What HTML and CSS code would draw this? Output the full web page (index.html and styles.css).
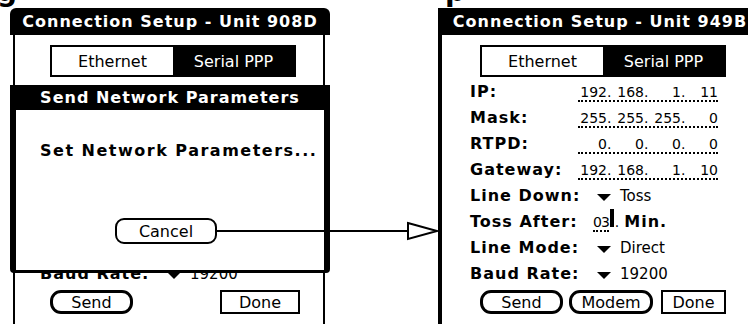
FILE: index.html
```html
<!DOCTYPE html>
<html lang="en">
<head>
    <meta charset="UTF-8">
    <title>Connection Setup</title>
    <link rel="stylesheet" href="styles.css">
</head>
<body>
    <div class="caption"><span class="frag-g">g</span><span class="frag-p">p</span></div>
    <div class="stage">
        <!-- left handheld: modal dialog over the setup form -->
        <div class="palm left">
            <div class="titlebar">Connection Setup - Unit 908D</div>
            <div class="form">
                <div class="tabs"><span class="tab">Ethernet</span><span class="tab on">Serial PPP</span></div>
                <div class="row covered"><span class="label">IP:</span><span class="ip"><span class="oct">192</span><span class="dot">.</span><span class="oct">168</span><span class="dot">.</span><span class="oct">1</span><span class="dot">.</span><span class="oct">12</span></span></div>
                <div class="row covered"><span class="label">Mask:</span><span class="ip"><span class="oct">255</span><span class="dot">.</span><span class="oct">255</span><span class="dot">.</span><span class="oct">255</span><span class="dot">.</span><span class="oct">0</span></span></div>
                <div class="row covered"><span class="label">RTPD:</span><span class="ip"><span class="oct">0</span><span class="dot">.</span><span class="oct">0</span><span class="dot">.</span><span class="oct">0</span><span class="dot">.</span><span class="oct">0</span></span></div>
                <div class="row covered"><span class="label">Gateway:</span><span class="ip"><span class="oct">192</span><span class="dot">.</span><span class="oct">168</span><span class="dot">.</span><span class="oct">1</span><span class="dot">.</span><span class="oct">10</span></span></div>
                <div class="row covered"><span class="label">Line Down:</span><span class="popup"><i class="tri"></i>Toss</span></div>
                <div class="row covered"><span class="label">Toss After:</span><span class="toss"><span class="mins">03</span><span class="dot-s">.</span><b class="unit">Min.</b></span></div>
                <div class="row covered"><span class="label">Line Mode:</span><span class="popup"><i class="tri"></i>Direct</span></div>
                <div class="row"><span class="label">Baud Rate:</span><span class="popup"><i class="tri"></i>19200</span></div>
                <div class="buttons">
                    <button class="btn round">Send</button>
                    <button class="btn square">Done</button>
                </div>
            </div>
            <div class="dialog">
                <div class="dialog-title">Send Network Parameters</div>
                <div class="dialog-body">
                    <p class="dialog-msg">Set Network Parameters...</p>
                    <button class="btn round thin cancel">Cancel</button>
                </div>
            </div>
        </div>

        <!-- right handheld: the setup form itself -->
        <div class="palm right">
            <div class="titlebar">Connection Setup - Unit 949B</div>
            <div class="form">
                <div class="tabs"><span class="tab">Ethernet</span><span class="tab on">Serial PPP</span></div>
                <div class="row"><span class="label">IP:</span><span class="ip"><span class="oct">192</span><span class="dot">.</span><span class="oct">168</span><span class="dot">.</span><span class="oct">1</span><span class="dot">.</span><span class="oct">11</span></span></div>
                <div class="row"><span class="label">Mask:</span><span class="ip"><span class="oct">255</span><span class="dot">.</span><span class="oct">255</span><span class="dot">.</span><span class="oct">255</span><span class="dot">.</span><span class="oct">0</span></span></div>
                <div class="row"><span class="label">RTPD:</span><span class="ip"><span class="oct">0</span><span class="dot">.</span><span class="oct">0</span><span class="dot">.</span><span class="oct">0</span><span class="dot">.</span><span class="oct">0</span></span></div>
                <div class="row"><span class="label">Gateway:</span><span class="ip"><span class="oct">192</span><span class="dot">.</span><span class="oct">168</span><span class="dot">.</span><span class="oct">1</span><span class="dot">.</span><span class="oct">10</span></span></div>
                <div class="row"><span class="label">Line Down:</span><span class="popup"><i class="tri"></i>Toss</span></div>
                <div class="row"><span class="label">Toss After:</span><span class="toss"><span class="mins">03</span><i class="caret"></i><span class="dot-s">.</span><b class="unit">Min.</b></span></div>
                <div class="row"><span class="label">Line Mode:</span><span class="popup"><i class="tri"></i>Direct</span></div>
                <div class="row"><span class="label">Baud Rate:</span><span class="popup"><i class="tri"></i>19200</span></div>
                <div class="buttons">
                    <button class="btn round">Send</button>
                    <button class="btn round">Modem</button>
                    <button class="btn square">Done</button>
                </div>
            </div>
        </div>
    </div>

    <svg class="arrow" width="748" height="324" viewBox="0 0 748 324">
        <line x1="217" y1="231" x2="409" y2="231" stroke="#000" stroke-width="2"/>
        <polygon points="408,223 437,231 408,239" fill="#fff" stroke="#000" stroke-width="2"/>
    </svg>
</body>
</html>
```

FILE: styles.css
```css
* {
    box-sizing: border-box;
}
body {
    margin: 0;
    width: 748px;
    height: 324px;
    overflow: hidden;
    position: relative;
    background: #fff;
    color: #000;
    font-family: "DejaVu Sans", sans-serif;
}
.caption {
    height: 8px;
    overflow: hidden;
    display: flex;
    font: bold 28px/28px "DejaVu Sans", sans-serif;
}
.caption span {
    display: block;
    margin-top: -22px;
}
.caption .frag-g {
    margin-left: -3px;
}
.caption .frag-p {
    margin-left: 428px;
}
.stage {
    display: flex;
    align-items: flex-start;
    padding-left: 10px;
    gap: 108px;
}
.palm {
    width: 320px;
    height: 316px;
    flex-shrink: 0;
    position: relative;
    display: flex;
    flex-direction: column;
}
.palm.right {
    border-left: 4px solid #000;
}
.titlebar {
    height: 27px;
    background: #000;
    color: #fff;
    font: bold 16px/27px "DejaVu Sans", sans-serif;
    letter-spacing: 1px;
    text-align: center;
    white-space: nowrap;
}
.left .titlebar {
    border-radius: 6px 6px 0 0;
}
.form {
    flex: 1;
    padding-top: 10px;
}
.left .form {
    margin: 0 5px 0 3px;
    padding-left: 25px;
    border-left: 2px solid #000;
    border-right: 2px solid #000;
}
.right .form {
    padding-left: 28px;
}
.tabs {
    display: flex;
    width: 246px;
    height: 32px;
    margin: 0 0 2px 10px;
    border: 2px solid #000;
    font-size: 16px;
}
.tab {
    flex: 1;
    display: flex;
    align-items: center;
    justify-content: center;
}
.tab.on {
    background: #000;
    color: #fff;
}
.row {
    display: flex;
    align-items: baseline;
    height: 26px;
    white-space: nowrap;
}
.row.covered {
    visibility: hidden;
}
.label {
    width: 108px;
    flex-shrink: 0;
    font: bold 16px/26px "DejaVu Sans", sans-serif;
    letter-spacing: 1px;
}
.ip {
    display: flex;
    width: 140px;
    font: 14px/16px "DejaVu Sans", sans-serif;
    border-bottom: 2px dotted #000;
}
.oct {
    width: 29px;
    text-align: right;
}
.dot {
    width: 8px;
}
.popup {
    display: flex;
    align-items: baseline;
    padding-left: 19px;
    font-size: 15px;
    line-height: 26px;
}
.tri {
    display: inline-block;
    width: 0;
    height: 0;
    margin: 0 9px 2px 0;
    border-left: 7px solid transparent;
    border-right: 7px solid transparent;
    border-top: 7px solid #000;
}
.toss {
    display: flex;
    align-items: baseline;
    padding-left: 15px;
}
.mins {
    font: 14px/16px "DejaVu Sans", sans-serif;
    letter-spacing: -1px;
    border-bottom: 2px dotted #000;
}
.caret {
    display: inline-block;
    width: 4px;
    height: 18px;
    margin: 0 1px -5px 1px;
    background: #000;
    box-shadow: -2px -7px 0 -5px #000;
}
.dot-s {
    font: 14px/16px "DejaVu Sans", sans-serif;
    margin-right: 5px;
}
.unit {
    font: bold 16px/26px "DejaVu Sans", sans-serif;
    letter-spacing: 1px;
}
.buttons {
    display: flex;
    margin: 3px 0 0 10px;
}
.left .buttons {
    gap: 87px;
}
.right .buttons {
    gap: 6px;
}
.btn {
    height: 24px;
    padding: 0;
    background: #fff;
    color: #000;
    font: 16px "DejaVu Sans", sans-serif;
    border: 2px solid #000;
}
.btn.round {
    width: 83px;
    border-width: 3px;
    border-radius: 11px;
}
.right .btn.round + .btn.round {
    width: 84px;
}
.btn.square {
    width: 80px;
}
.right .btn.square {
    width: 65px;
    margin-left: 2px;
}
.dialog {
    position: absolute;
    top: 77px;
    left: 0;
    width: 320px;
    height: 188px;
    background: #fff;
    border-left: 6px solid #000;
    border-right: 6px solid #000;
    border-bottom: 3px solid #000;
    border-radius: 0 0 4px 4px;
}
.dialog-title {
    height: 25px;
    background: #000;
    color: #fff;
    font: bold 16px/25px "DejaVu Sans", sans-serif;
    letter-spacing: 1px;
    text-align: center;
}
.dialog-body {
    padding-left: 24px;
}
.dialog-msg {
    margin: 31px 0 0 0;
    font: bold 16px/20px "DejaVu Sans", sans-serif;
    letter-spacing: 1.5px;
    white-space: nowrap;
}
.btn.cancel {
    display: block;
    width: 102px;
    height: 26px;
    margin: 57px 0 0 75px;
    border-width: 2px;
    border-radius: 9px;
}
.arrow {
    position: absolute;
    top: 0;
    left: 0;
    pointer-events: none;
}
```
